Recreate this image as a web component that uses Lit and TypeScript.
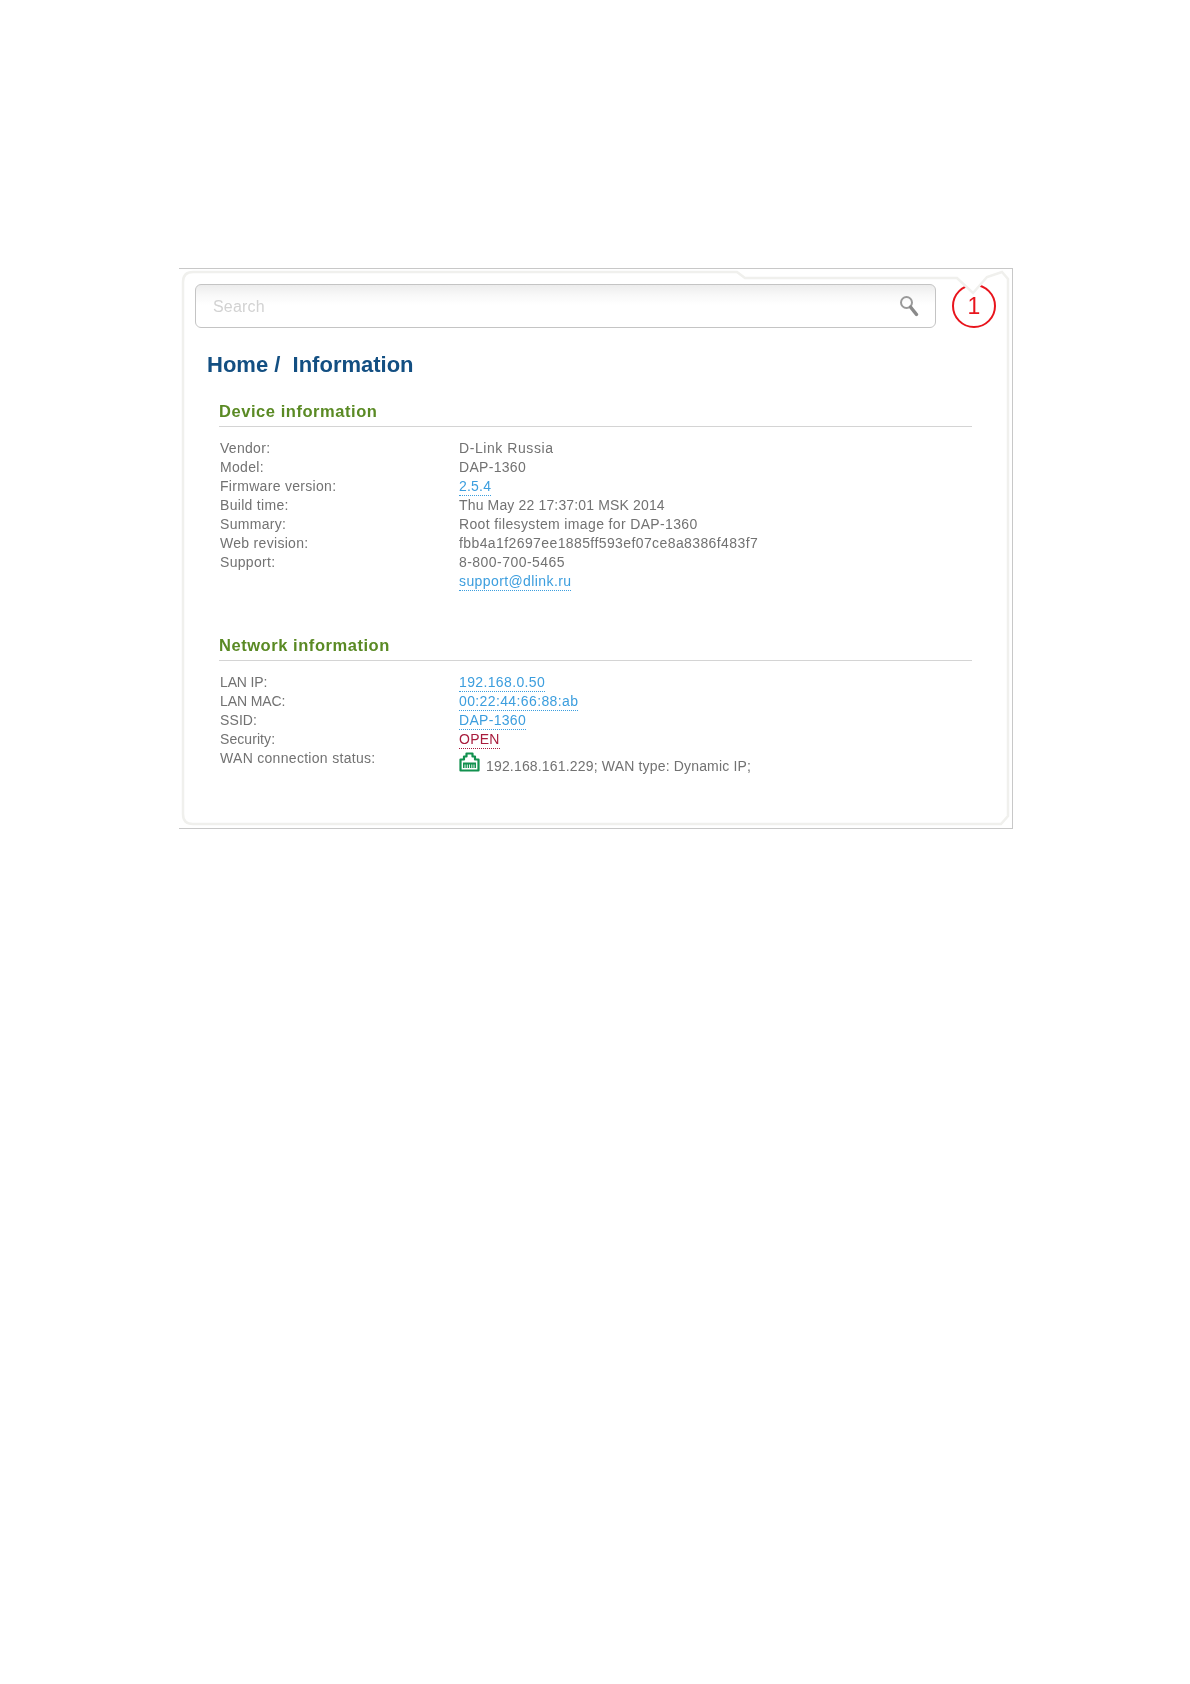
import { LitElement, html, css, svg } from "lit";
import { customElement } from "lit/decorators.js";

type Row = { label: string; value: string; kind?: "link" | "danger" | "wan"; ls?: number; labelLs?: number };

const device: Row[] = [
  { label: "Vendor:", value: "D-Link Russia", ls: 0.57 },
  { label: "Model:", value: "DAP-1360", ls: 0.3 },
  { label: "Firmware version:", value: "2.5.4", kind: "link", ls: 0.2 },
  { label: "Build time:", value: "Thu May 22 17:37:01 MSK 2014", ls: 0.15 },
  { label: "Summary:", value: "Root filesystem image for DAP-1360", ls: 0.36 },
  { label: "Web revision:", value: "fbb4a1f2697ee1885ff593ef07ce8a8386f483f7", ls: 0.4 },
  { label: "Support:", value: "8-800-700-5465", ls: 0.46 },
  { label: "", value: "support@dlink.ru", kind: "link", ls: 0.4 },
];

const network: Row[] = [
  { label: "LAN IP:", value: "192.168.0.50", kind: "link", ls: 0.36, labelLs: -0.15 },
  { label: "LAN MAC:", value: "00:22:44:66:88:ab", kind: "link", ls: 0.38, labelLs: -0.1 },
  { label: "SSID:", value: "DAP-1360", kind: "link", ls: 0.3, labelLs: 0.1 },
  { label: "Security:", value: "OPEN", kind: "danger", ls: 0.25, labelLs: 0.07 },
  { label: "WAN connection status:", value: "192.168.161.229; WAN type: Dynamic IP;", kind: "wan", ls: 0.17 },
];

@customElement("app-root")
export class AppRoot extends LitElement {
  static styles = css`
    :host {
      display: block;
      min-height: 1684px;
      background: #fff;
      padding: 268px 0 0 179px;
      box-sizing: border-box;
      font-family: "Liberation Sans", Arial, sans-serif;
    }
    .frame {
      position: relative;
      box-sizing: border-box;
      width: 834px;
      height: 561px;
      border-top: 1px solid #c8c8c8;
      border-right: 1px solid #c8c8c8;
      border-bottom: 1px solid #c8c8c8;
      padding: 15px 0 0 16px;
      filter: blur(0.35px);
    }
    .panel {
      position: absolute;
      left: 0;
      top: 0;
      width: 833px;
      height: 559px;
      pointer-events: none;
    }
    .top {
      display: flex;
      align-items: center;
      gap: 16px;
    }
    .search {
      box-sizing: border-box;
      width: 741px;
      height: 44px;
      border: 1px solid #c4c4c4;
      border-radius: 6px;
      background: linear-gradient(#ececec 0, #f8f8f8 10px, #fff 20px);
      display: flex;
      align-items: center;
      justify-content: space-between;
      padding: 0 16px 0 17px;
      font-size: 16px;
      letter-spacing: 0.2px;
      color: #d2d2d2;
    }
    .search span {
      padding-top: 2px;
    }
    .mark {
      box-sizing: border-box;
      width: 44px;
      height: 44px;
      border: 2px solid #e8141c;
      border-radius: 50%;
      display: flex;
      align-items: center;
      justify-content: center;
      color: #e8141c;
      font-size: 23px;
    }
    h1 {
      margin: 24px 0 0 12px;
      font-size: 22px;
      line-height: 26px;
      font-weight: 700;
      color: #134f82;
      white-space: pre;
    }
    section {
      margin-left: 24px;
      width: 753px;
    }
    h2 {
      margin: 0;
      font-size: 16.5px;
      letter-spacing: 0.55px;
      line-height: 20px;
      font-weight: 700;
      color: #5a8a24;
      padding-bottom: 5px;
      border-bottom: 1px solid #d4d4d4;
    }
    .device {
      margin-top: 23px;
    }
    .network {
      margin-top: 44px;
    }
    .rows {
      margin: 12px 0 0 1px;
      display: grid;
      grid-template-columns: 239px 1fr;
      grid-auto-rows: 19px;
      font-size: 14px;
      letter-spacing: 0.3px;
      line-height: 19px;
      color: #727272;
    }
    .link,
    .danger {
      padding-bottom: 1px;
      border-bottom: 1px dotted currentColor;
    }
    .link {
      color: #3c9ede;
    }
    .danger {
      color: #a81c3c;
    }
    .wan {
      display: flex;
      align-items: flex-end;
      gap: 6px;
      height: 27px;
      margin-top: -1px;
      line-height: 19px;
    }
    .wan svg {
      margin-bottom: 3px;
      flex: none;
    }
    .wan span {
      margin-bottom: -1px;
    }
  `;

  private row(r: Row) {
    let value;
    const ls = `letter-spacing:${r.ls ?? 0.3}px`;
    const labelLs = `letter-spacing:${r.labelLs ?? 0.3}px`;
    if (r.kind === "link") value = html`<div style=${ls}><span class="link">${r.value}</span></div>`;
    else if (r.kind === "danger") value = html`<div style=${ls}><span class="danger">${r.value}</span></div>`;
    else if (r.kind === "wan")
      value = html`<div class="wan" style=${ls}>
        <svg width="21" height="20" viewBox="0 0 21 20">
          <path d="M1.500 7.500H5V4.500H7.500V1.500H13.500V4.500H16V7.500H19.500V18.500H1.500Z" fill="#fff" stroke="#12914f" stroke-width="2.200" stroke-linejoin="round" />
          <path d="M4 10.500H17V16H4Z" fill="#12914f" />
          <path d="M6 12.500V16M8.300 12.500V16M10.500 12.500V16M12.800 12.500V16M15 12.500V16" stroke="#fff" stroke-width="0.900" />
        </svg>
        <span>${r.value}</span>
      </div>`;
    else value = html`<div style=${ls}>${r.value}</div>`;
    return html`<div style=${labelLs}>${r.label}</div>${value}`;
  }

  render() {
    return html`
      <div class="frame">
        <div class="content">
          <div class="top">
            <div class="search">
              <span>Search</span>
              <svg width="20" height="22" viewBox="0 0 20 22">
                <circle cx="7.500" cy="7.500" r="5.500" fill="none" stroke="#9a9a9a" stroke-width="2" />
                <path d="M11.500 12l6 7.500" stroke="#8a8a8a" stroke-width="3.500" stroke-linecap="round" />
              </svg>
            </div>
            <div class="mark">1</div>
          </div>
          <h1>Home /  Information</h1>
          <section class="device">
            <h2>Device information</h2>
            <div class="rows">${device.map((r) => this.row(r))}</div>
          </section>
          <section class="network">
            <h2>Network information</h2>
            <div class="rows">${network.map((r) => this.row(r))}</div>
          </section>
        </div>
        <svg class="panel" viewBox="0 0 833 559" aria-hidden="true">
          ${svg`<path d="M778 9L794 24L808 8Z" fill="#fff" />
          <path d="M14 3H558L566 9H778L794 24L808 8L823 3L829 10V547L822 555H14Q4 555 4 545V13Q4 3 14 3Z" fill="none" stroke="#f0f0ed" stroke-width="2.500" />`}
        </svg>
      </div>
    `;
  }
}
